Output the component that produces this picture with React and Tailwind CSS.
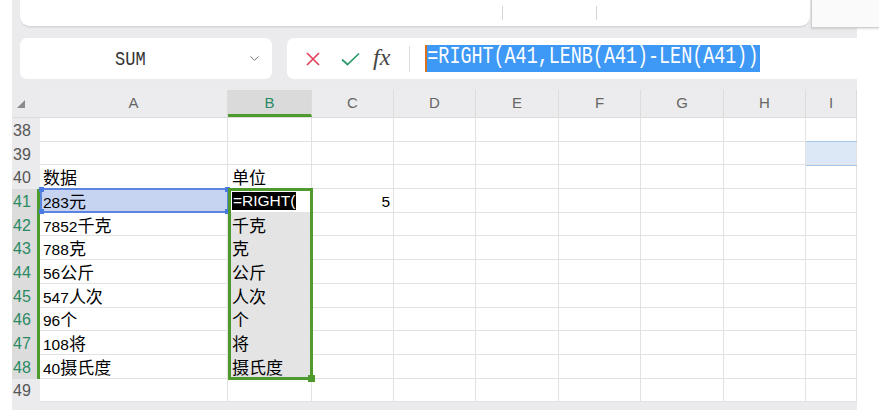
import { ChevronDown } from "lucide-react";

const COLS = [
  { k: "A", w: 188 },
  { k: "B", w: 84 },
  { k: "C", w: 82 },
  { k: "D", w: 82 },
  { k: "E", w: 83 },
  { k: "F", w: 82 },
  { k: "G", w: 83 },
  { k: "H", w: 82 },
  { k: "I", w: 51 },
];

const ROWS = [38, 39, 40, 41, 42, 43, 44, 45, 46, 47, 48, 49];

// [number part, unit part]
const DATA = {
  40: { A: ["", "数据"], B: ["", "单位"] },
  41: { A: ["283", "元"] },
  42: { A: ["7852", "千克"], B: ["", "千克"] },
  43: { A: ["788", "克"], B: ["", "克"] },
  44: { A: ["56", "公斤"], B: ["", "公斤"] },
  45: { A: ["547", "人次"], B: ["", "人次"] },
  46: { A: ["96", "个"], B: ["", "个"] },
  47: { A: ["108", "将"], B: ["", "将"] },
  48: { A: ["40", "摄氏度"], B: ["", "摄氏度"] },
};

const ROW_H = 23.7;

function CellText({ v }) {
  if (!v) return null;
  return (
    <span className="whitespace-nowrap text-black leading-[18px]">
      {v[0] && <span className="font-['Liberation_Sans',sans-serif] text-[15.5px]">{v[0]}</span>}
      <span className="font-['Noto_Sans_CJK_SC',sans-serif] text-[17px]">{v[1]}</span>
    </span>
  );
}

function Cell({ row, col }) {
  let bg = "bg-white";
  if (col.k === "A" && row === 41) bg = "bg-[#c6d4f1]";
  if (col.k === "B" && row >= 42 && row <= 48) bg = "bg-[#e4e4e4]";
  if (col.k === "I" && row === 39) bg = "bg-[#dce8f5]";
  const v = DATA[row]?.[col.k];
  return (
    <div
      style={{ width: col.w }}
      className={`${bg} flex items-center pt-[3px] border-r border-b border-[#e2e2e2] ${col.k === "B" ? "pl-[4px]" : "pl-[3px]"}`}
    >
      {col.k === "B" && row === 41 ? (
        <span className="-mt-[2px] bg-black text-white font-['Liberation_Sans',sans-serif] text-[15.5px] leading-[18px] px-[1px] whitespace-nowrap">
          =RIGHT(
        </span>
      ) : col.k === "C" && row === 41 ? (
        <span className="ml-auto pr-[3px] font-['Liberation_Sans',sans-serif] text-[15.5px] leading-[18px] text-black">5</span>
      ) : (
        <CellText v={v} />
      )}
    </div>
  );
}

export default function App() {
  return (
    <div className="relative w-[879px] h-[410px] bg-white overflow-hidden font-['Liberation_Sans',sans-serif]">
      <div className="ml-[12px] w-[845px] h-full bg-[#ebebed] flex flex-col">
        {/* top ribbon panel */}
        <div className="ml-[8px] w-[790px] h-[27px] bg-white rounded-b-[10px] border-b border-[#d6d6d8] shadow-[0_1px_1px_rgba(0,0,0,0.06)] flex items-center">
          <div className="ml-[482px] w-px h-[14px] bg-[#d5d5d5]" />
          <div className="ml-[93px] w-px h-[14px] bg-[#d5d5d5]" />
        </div>

        {/* name box + formula bar */}
        <div className="flex mt-[11px] h-[41px] pl-[8px]">
          <div className="w-[252px] h-full bg-white rounded-[7px] relative">
            <span className="absolute left-[95px] top-[9px] font-['Liberation_Mono',monospace] text-[17px] text-[#333] scale-y-[1.2]">
              SUM
            </span>
            <ChevronDown className="absolute left-[227px] top-[13px]" size={15} color="#777" strokeWidth={1.6} />
          </div>
          <div className="ml-[15px] w-[570px] h-full bg-white rounded-l-[7px] flex items-center">
            <svg className="ml-[19px]" width="14" height="14" viewBox="0 0 14 14">
              <path d="M1 1L13 13M13 1L1 13" stroke="#e0445c" strokeWidth="1.7" fill="none" />
            </svg>
            <svg className="ml-[21px]" width="19" height="14" viewBox="0 0 19 14">
              <path d="M1 7.5L6.5 12.5L18 1.5" stroke="#2b9a6a" strokeWidth="1.7" fill="none" />
            </svg>
            <span className="ml-[13px] font-['Liberation_Serif',serif] italic text-[24px] text-[#444] leading-none -mt-[3px]">
              fx
            </span>
            <div className="ml-[19px] w-px h-[26px] bg-[#dcdcdc]" />
            <div className="ml-[15px] h-[27px] flex items-center bg-[#3d98f6] border-l-2 border-[#d9731f] pr-[2px]">
              <span className="inline-block font-['Liberation_Mono',monospace] text-[18.4px] text-white scale-y-[1.25] leading-none">
                =RIGHT(A41,LENB(A41)-LEN(A41))
              </span>
            </div>
          </div>
        </div>

        {/* grid */}
        <div className="mt-[11px] relative">
          {/* column headers */}
          <div className="flex h-[28px] border-b border-[#dcdcdc]">
            <div className="w-[28px] bg-[#ebebed] relative">
              <svg className="absolute left-[5px] top-[10px]" width="8" height="8" viewBox="0 0 8 8">
                <polygon points="8,0 8,8 0,8" fill="#8a8a8a" />
              </svg>
            </div>
            {COLS.map((c) => (
              <div
                key={c.k}
                style={{ width: c.w }}
                className={`flex items-center justify-center text-[15px] border-r border-[#dcdcdc] ${
                  c.k === "B"
                    ? "bg-[#dadada] text-[#2a8a63] border-b-[3px] border-b-[#4e9a2c] pt-[3px]"
                    : "bg-[#ececee] text-[#666]"
                }`}
              >
                {c.k}
              </div>
            ))}
          </div>

          {/* rows */}
          {ROWS.map((r) => {
            const hi = r >= 41 && r <= 48;
            return (
              <div key={r} className="flex" style={{ height: ROW_H }}>
                <div
                  className={`w-[28px] flex items-center text-[16px] pl-[1px] pt-[2px] ${
                    hi ? "bg-[#dcdcdc] text-[#2a8a63] border-r-[3px] border-[#4e9a2c]" : "bg-[#ebebed] text-[#555]"
                  }`}
                >
                  {r}
                </div>
                {COLS.map((c) => (
                  <Cell key={c.k} row={r} col={c} />
                ))}
              </div>
            );
          })}

          {/* I39 highlight edges */}
          <div className="absolute left-[794px] top-[51px] w-[51px] h-[25px] border-y border-[#a8c5ea] pointer-events-none" />

          {/* A41 active selection */}
          <div className="absolute left-[28px] top-[98px] w-[189px] h-[25px] border-2 border-[#5b84e0] pointer-events-none">
            <div className="absolute -left-[3px] -top-[3px] w-[5px] h-[5px] bg-[#4a7be0]" />
            <div className="absolute -right-[3px] -top-[3px] w-[5px] h-[5px] bg-[#4a7be0]" />
            <div className="absolute -left-[3px] -bottom-[3px] w-[5px] h-[5px] bg-[#4a7be0]" />
            <div className="absolute -right-[3px] -bottom-[3px] w-[5px] h-[5px] bg-[#4a7be0]" />
          </div>

          {/* B41:B48 reference range */}
          <div className="absolute left-[216px] top-[98px] w-[85px] h-[192px] border-[3px] border-[#4e9a2c] pointer-events-none">
            <div className="absolute -right-[5px] -bottom-[5px] w-[7px] h-[7px] bg-[#4e9a2c]" />
          </div>
        </div>
      </div>

      {/* right top floating box */}
      <div className="absolute left-[811px] top-0 w-[68px] h-[28px] bg-[#fafafa] border-l border-b border-[#cfcfcf] shadow-[0_1px_2px_rgba(0,0,0,0.12)]" />
    </div>
  );
}
